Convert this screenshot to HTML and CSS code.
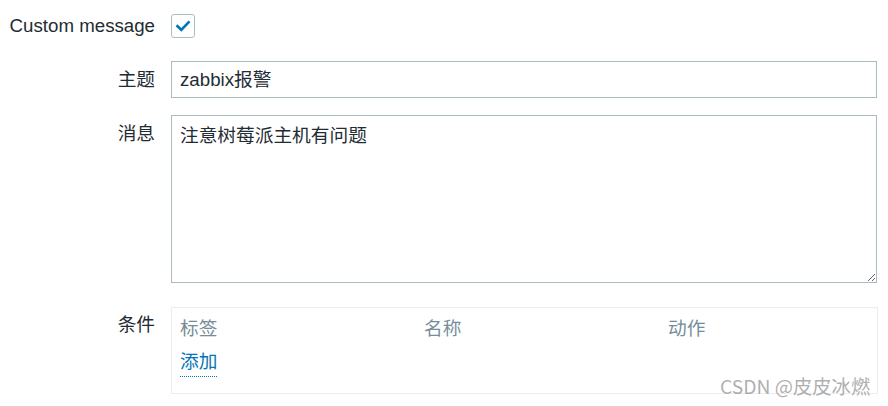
FILE: index.html
```html
<!DOCTYPE html>
<html lang="zh-CN">
<head>
<meta charset="utf-8">
<title>Custom message</title>
<link rel="stylesheet" href="styles.css">
</head>
<body>
<div class="form">
  <div class="row row-check">
    <div class="label">Custom message</div>
    <div class="field">
      <span class="checkbox">
        <svg viewBox="0 0 24 24" width="24" height="24"><path d="M6.5 12.2 L10.3 16 L17.6 8.4" fill="none" stroke="#0275b8" stroke-width="2.6" stroke-linecap="square"/></svg>
      </span>
    </div>
  </div>
  <div class="row row-subject">
    <div class="label">主题</div>
    <div class="field">
      <div class="input">zabbix报警</div>
    </div>
  </div>
  <div class="row row-message">
    <div class="label">消息</div>
    <div class="field">
      <textarea class="textarea">注意树莓派主机有问题</textarea>
    </div>
  </div>
  <div class="row row-cond">
    <div class="label">条件</div>
    <div class="field">
      <div class="table">
        <div class="thead">
          <span>标签</span>
          <span>名称</span>
          <span>动作</span>
        </div>
        <div class="tbody">
          <a class="link">添加</a>
        </div>
      </div>
    </div>
  </div>
</div>
<div class="watermark">CSDN @皮皮冰燃</div>
</body>
</html>
```
FILE: styles.css
```css
html, body {
  margin: 0;
  padding: 0;
  background: #ffffff;
}
body {
  font-family: "Liberation Sans", Arial, "Noto Sans CJK SC", sans-serif;
  font-size: 18.7px;
  color: #1f2c33;
  width: 888px;
  height: 406px;
  overflow: hidden;
  position: relative;
}
.form {
  display: flex;
  flex-direction: column;
  padding-top: 14px;
}
.row {
  display: grid;
  grid-template-columns: 155px 706px;
  column-gap: 16px;
}
.label {
  text-align: right;
  white-space: nowrap;
  line-height: 24px;
}
.row-subject { margin-top: 23px; }
.row-subject .label { line-height: 37px; }
.row-message { margin-top: 17px; }
.row-message .label { line-height: 38px; }
.row-cond { margin-top: 24px; }
.row-cond .label { line-height: 36px; }
.checkbox {
  display: block;
  width: 22px;
  height: 22px;
  border: 1px solid #acbbc2;
  border-radius: 3px;
  box-sizing: content-box;
}
.checkbox svg {
  display: block;
  margin: -1px;
}
.input {
  height: 35px;
  border: 1px solid #acbbc2;
  padding: 0 8px;
  line-height: 35px;
}
.textarea {
  display: block;
  width: 706px;
  height: 168px;
  box-sizing: border-box;
  border: 1px solid #acbbc2;
  border-radius: 0;
  padding: 6px 8px;
  margin: 0;
  font-family: "Liberation Sans", Arial, "Noto Sans CJK SC", sans-serif;
  font-size: 18.7px;
  line-height: 27px;
  color: #1f2c33;
  resize: vertical;
  outline: none;
}
.table {
  width: 707px;
  height: 87px;
  box-sizing: border-box;
  border: 1px solid #ebeef0;
  padding: 6px 8px 0 8px;
}
.thead {
  display: grid;
  grid-template-columns: 244px 244px 1fr;
  color: #768d99;
  line-height: 30px;
}
.tbody {
  padding-top: 5px;
}
.link {
  color: #0275b8;
  text-decoration: none;
  border-bottom: 1px dotted #0275b8;
  line-height: 26px;
  display: inline-block;
  padding-bottom: 1px;
}
.watermark {
  position: absolute;
  left: 720px;
  top: 373px;
  font-family: "Noto Sans CJK SC", sans-serif;
  font-size: 19.3px;
  color: rgba(140, 140, 140, 0.7);
  line-height: 27px;
  white-space: nowrap;
}
```
